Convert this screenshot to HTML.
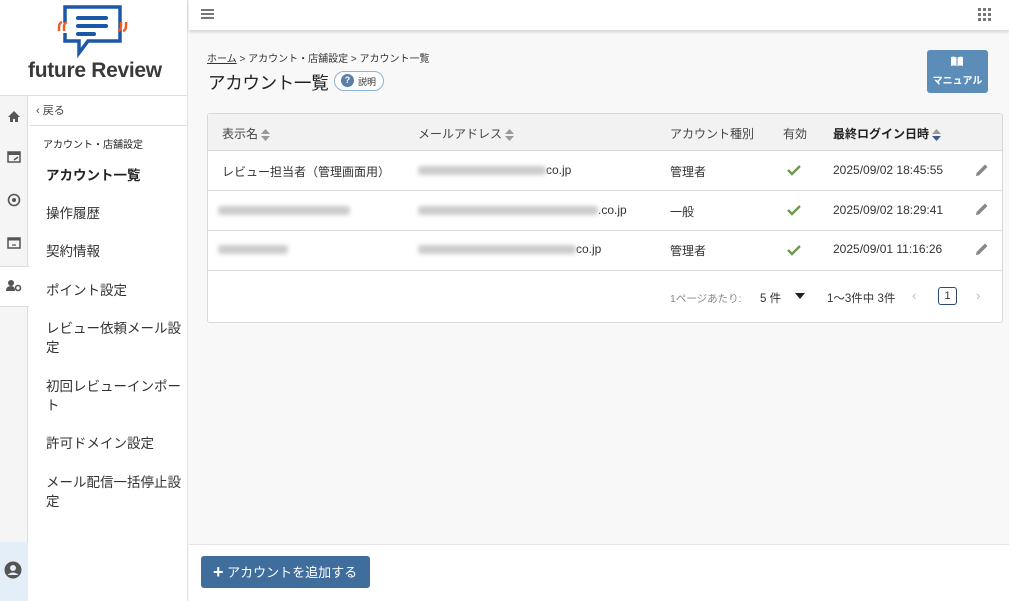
<!DOCTYPE html>
<html><head><meta charset="utf-8"><style>
*{box-sizing:border-box;margin:0;padding:0}
body{width:1009px;height:601px;overflow:hidden;font-family:"Liberation Sans","Noto Sans CJK JP",sans-serif;color:#333;background:#f8f8f8;position:relative}
.abs{position:absolute}
.side{left:0;top:0;width:188px;height:601px;background:#fff;border-right:1px solid #e2e2e2}
.icol{left:0;top:96px;width:28px;height:505px;background:#f5f5f5;border-right:1px solid #ddd}
.menu a{position:absolute;left:46px;font-size:13.5px;color:#333;text-decoration:none;line-height:19px}
.blur{display:inline-block;height:9px;background:#ccc;filter:blur(2px);vertical-align:middle;border-radius:3px}
.th{font-size:12px;color:#444}
.td{font-size:12px;color:#333}
.sort{display:inline-block;width:9px;vertical-align:middle;margin-left:3px}
</style></head><body>
<div class="abs side"></div>
<!-- logo -->
<svg class="abs" style="left:56px;top:5px" width="76" height="56" viewBox="0 0 76 56">
<path d="M9 18 V2 H64 V36 H32 L23 48 V36 H9 V28" fill="none" stroke="#1b59a8" stroke-width="3.5"/>
<rect x="20" y="11" width="32" height="4" rx="2" fill="#1b59a8"/>
<rect x="20" y="19" width="32" height="4" rx="2" fill="#1b59a8"/>
<rect x="20" y="27" width="20" height="4" rx="2" fill="#1b59a8"/>
<path d="M3 26 V22 Q3 18 6 17 M8 26 V22 Q8 18 11 17" fill="none" stroke="#f05a22" stroke-width="2.4"/>
<path d="M61 17 V21 Q61 25 58 26 M66 17 V21 Q66 25 63 26" fill="none" stroke="#f05a22" stroke-width="2.4" transform="translate(4,0)"/>
</svg>
<div class="abs" style="left:28px;top:59px;font-size:21px;font-weight:bold;color:#3a3a3a;letter-spacing:-0.3px">future Review</div>
<div class="abs" style="left:0;top:95px;width:188px;border-top:1px solid #ddd"></div>
<div class="abs icol"></div>
<div class="abs" style="left:0;top:266px;width:29px;height:41px;background:#fff;border-top:1px solid #ddd;border-bottom:1px solid #ddd"></div>
<div class="abs" style="left:0;top:542px;width:28px;height:59px;background:#e3eef8"></div>
<!-- side icons -->
<svg class="abs" style="left:7px;top:110px" width="14" height="13" viewBox="0 0 14 13"><path d="M7 1 L13 7 H11 V12 H8 V9 H6 V12 H3 V7 H1Z" fill="#555"/></svg>
<svg class="abs" style="left:7px;top:151px" width="14" height="12" viewBox="0 0 14 12"><rect x="1" y="1" width="12" height="10" fill="none" stroke="#555" stroke-width="1.5"/><rect x="1" y="1" width="12" height="3" fill="#555"/><path d="M7 9 L11 6" stroke="#555" stroke-width="1.5"/></svg>
<svg class="abs" style="left:7px;top:193px" width="14" height="14" viewBox="0 0 14 14"><circle cx="7" cy="7" r="5.5" fill="none" stroke="#555" stroke-width="1.6"/><circle cx="7" cy="7" r="2" fill="#555"/></svg>
<svg class="abs" style="left:7px;top:237px" width="14" height="12" viewBox="0 0 14 12"><rect x="1" y="1" width="12" height="10" fill="none" stroke="#555" stroke-width="1.5"/><rect x="1" y="1" width="12" height="2.5" fill="#555"/><path d="M5 8 H9" stroke="#555" stroke-width="1.2"/></svg>
<svg class="abs" style="left:6px;top:279px" width="16" height="13" viewBox="0 0 16 13"><circle cx="5" cy="4" r="3" fill="#555"/><path d="M0 12 Q0 7 5 7 Q9 7 9 12Z" fill="#555"/><circle cx="12" cy="9" r="2.5" fill="none" stroke="#555" stroke-width="1.6"/></svg>
<svg class="abs" style="left:4px;top:561px" width="18" height="18" viewBox="0 0 18 18"><circle cx="9" cy="9" r="8.5" fill="#555"/><circle cx="9" cy="7" r="3" fill="#e3eef8"/><path d="M3.5 14 Q9 9 14.5 14" fill="#e3eef8"/></svg>
<div class="abs" style="left:36px;top:102px;font-size:11px;color:#444">‹ 戻る</div>
<div class="abs" style="left:29px;top:125px;width:159px;border-top:1px solid #ddd"></div>
<div class="abs" style="left:43px;top:136px;font-size:10px;color:#222">アカウント・店舗設定</div>
<div class="menu">
<a style="top:166px;font-weight:bold;color:#222">アカウント一覧</a>
<a style="top:204px">操作履歴</a>
<a style="top:242px">契約情報</a>
<a style="top:281px">ポイント設定</a>
<a style="top:319px;width:135px">レビュー依頼メール設定</a>
<a style="top:377px;width:135px">初回レビューインポート</a>
<a style="top:434px">許可ドメイン設定</a>
<a style="top:473px;width:135px">メール配信一括停止設定</a>
</div>
<!-- top bar -->
<div class="abs" style="left:189px;top:0;width:820px;height:30px;background:#fff;box-shadow:0 2px 3px rgba(0,0,0,.15)"></div>
<div class="abs" style="left:201px;top:9px;width:13px;height:2px;background:#777;box-shadow:0 4px 0 #777,0 8px 0 #777"></div>
<svg class="abs" style="left:978px;top:8px" width="13" height="13" viewBox="0 0 13 13" fill="#777"><rect x="0" y="0" width="3" height="3"/><rect x="5" y="0" width="3" height="3"/><rect x="10" y="0" width="3" height="3"/><rect x="0" y="5" width="3" height="3"/><rect x="5" y="5" width="3" height="3"/><rect x="10" y="5" width="3" height="3"/><rect x="0" y="10" width="3" height="3"/><rect x="5" y="10" width="3" height="3"/><rect x="10" y="10" width="3" height="3"/></svg>
<!-- breadcrumb -->
<div class="abs" style="left:207px;top:50px;font-size:10px;color:#333"><span style="text-decoration:underline">ホーム</span> &gt; アカウント・店舗設定 &gt; アカウント一覧</div>
<div class="abs" style="left:208px;top:70px;font-size:17.5px;color:#222;letter-spacing:-0.3px">アカウント一覧</div>
<div class="abs" style="left:334px;top:71px;width:50px;height:20px;border:1px solid #8ab4d8;border-radius:10px;background:#fff;font-size:9px;color:#333;padding:3px 0 0 23px">説明</div>
<div class="abs" style="left:341px;top:74px;width:13px;height:13px;border-radius:50%;background:#5a7fa8;color:#fff;font-size:9px;font-weight:bold;text-align:center;line-height:13px">?</div>
<div class="abs" style="left:927px;top:50px;width:61px;height:43px;background:#5b8db8;border-radius:3px;color:#fff;font-size:10px;font-weight:bold;text-align:center;padding-top:22px">マニュアル</div>
<svg class="abs" style="left:950px;top:56px" width="14" height="11" viewBox="0 0 14 11"><path d="M1 1 Q4 0 6.5 1.5 V10 Q4 9 1 10Z M7.5 1.5 Q10 0 13 1 V10 Q10 9 7.5 10Z" fill="#fff"/></svg>
<!-- table -->
<div class="abs" style="left:207px;top:113px;width:796px;height:210px;background:#fff;border:1px solid #d8d8d8;border-radius:3px"></div>
<div class="abs" style="left:208px;top:114px;width:794px;height:37px;background:#f2f2f2;border-bottom:1px solid #d8d8d8"></div>
<div class="abs" style="left:208px;top:190px;width:794px;border-top:1px solid #ddd"></div>
<div class="abs" style="left:208px;top:230px;width:794px;border-top:1px solid #ddd"></div>
<div class="abs" style="left:208px;top:270px;width:794px;border-top:1px solid #ddd"></div>
<div class="abs th" style="left:222px;top:125px">表示名<svg class="sort" width="9" height="12" viewBox="0 0 9 12"><path d="M0 5 L4.5 0 L9 5Z M0 7 L4.5 12 L9 7Z" fill="#999"/></svg></div>
<div class="abs th" style="left:418px;top:125px">メールアドレス<svg class="sort" width="9" height="12" viewBox="0 0 9 12"><path d="M0 5 L4.5 0 L9 5Z M0 7 L4.5 12 L9 7Z" fill="#999"/></svg></div>
<div class="abs th" style="left:670px;top:125px">アカウント種別</div>
<div class="abs th" style="left:783px;top:125px">有効</div>
<div class="abs th" style="left:833px;top:125px;font-weight:bold;color:#222">最終ログイン日時<svg class="sort" width="9" height="12" viewBox="0 0 9 12"><path d="M0 5 L4.5 0 L9 5Z" fill="#999"/><path d="M0 7 L4.5 12 L9 7Z" fill="#3b5f8a"/></svg></div>
<!-- rows -->
<div class="abs td" style="left:222px;top:163px">レビュー担当者（管理画面用）</div>
<div class="abs td" style="left:418px;top:163px"><span class="blur" style="width:128px"></span>co.jp</div>
<div class="abs td" style="left:670px;top:163px">管理者</div>
<div class="abs td" style="left:218px;top:203px"><span class="blur" style="width:132px"></span></div>
<div class="abs td" style="left:418px;top:203px"><span class="blur" style="width:180px"></span>.co.jp</div>
<div class="abs td" style="left:670px;top:203px">一般</div>
<div class="abs td" style="left:218px;top:242px"><span class="blur" style="width:70px"></span></div>
<div class="abs td" style="left:418px;top:242px"><span class="blur" style="width:158px"></span>co.jp</div>
<div class="abs td" style="left:670px;top:242px">管理者</div>
<div class="abs td" style="left:833px;top:163px">2025/09/02 18:45:55</div>
<div class="abs td" style="left:833px;top:203px">2025/09/02 18:29:41</div>
<div class="abs td" style="left:833px;top:242px">2025/09/01 11:16:26</div>
<svg class="abs" style="left:787px;top:165px" width="14" height="11" viewBox="0 0 14 11"><path d="M1 5 L5 9 L13 1" fill="none" stroke="#6a9a4a" stroke-width="2.4"/></svg>
<svg class="abs" style="left:787px;top:205px" width="14" height="11" viewBox="0 0 14 11"><path d="M1 5 L5 9 L13 1" fill="none" stroke="#6a9a4a" stroke-width="2.4"/></svg>
<svg class="abs" style="left:787px;top:245px" width="14" height="11" viewBox="0 0 14 11"><path d="M1 5 L5 9 L13 1" fill="none" stroke="#6a9a4a" stroke-width="2.4"/></svg>
<svg class="abs" style="left:975px;top:163px" width="14" height="14" viewBox="0 0 14 14"><path d="M1 13 L1.5 10 L10 1.5 L12.5 4 L4 12.5Z" fill="#888"/></svg>
<svg class="abs" style="left:975px;top:202px" width="14" height="14" viewBox="0 0 14 14"><path d="M1 13 L1.5 10 L10 1.5 L12.5 4 L4 12.5Z" fill="#888"/></svg>
<svg class="abs" style="left:975px;top:242px" width="14" height="14" viewBox="0 0 14 14"><path d="M1 13 L1.5 10 L10 1.5 L12.5 4 L4 12.5Z" fill="#888"/></svg>
<!-- footer -->
<div class="abs" style="left:670px;top:291px;font-size:10.5px;color:#888">1ページあたり:</div>
<div class="abs" style="left:760px;top:290px;font-size:11.5px;color:#333">5 件</div>
<svg class="abs" style="left:795px;top:293px" width="10" height="6" viewBox="0 0 10 6"><path d="M0 0 H10 L5 6Z" fill="#222"/></svg>
<div class="abs" style="left:827px;top:290px;font-size:11.5px;color:#333">1〜3件中 3件</div>
<div class="abs" style="left:912px;top:288px;font-size:13px;color:#bbb">‹</div>
<div class="abs" style="left:938px;top:287px;width:19px;height:18px;border:1px solid #2c4a6e;border-radius:3px;font-size:11px;text-align:center;line-height:16px;color:#333">1</div>
<div class="abs" style="left:976px;top:288px;font-size:13px;color:#bbb">›</div>
<!-- bottom bar -->
<div class="abs" style="left:189px;top:544px;width:820px;height:57px;background:#fff;border-top:1px solid #e4e4e4"></div>
<div class="abs" style="left:201px;top:556px;width:169px;height:32px;background:#3f6d9c;border-radius:3px;color:#fff;font-size:13px;line-height:32px;padding-left:12px"><span style="font-size:18px;font-weight:bold;vertical-align:-1px">+</span> アカウントを追加する</div>
</body></html>
